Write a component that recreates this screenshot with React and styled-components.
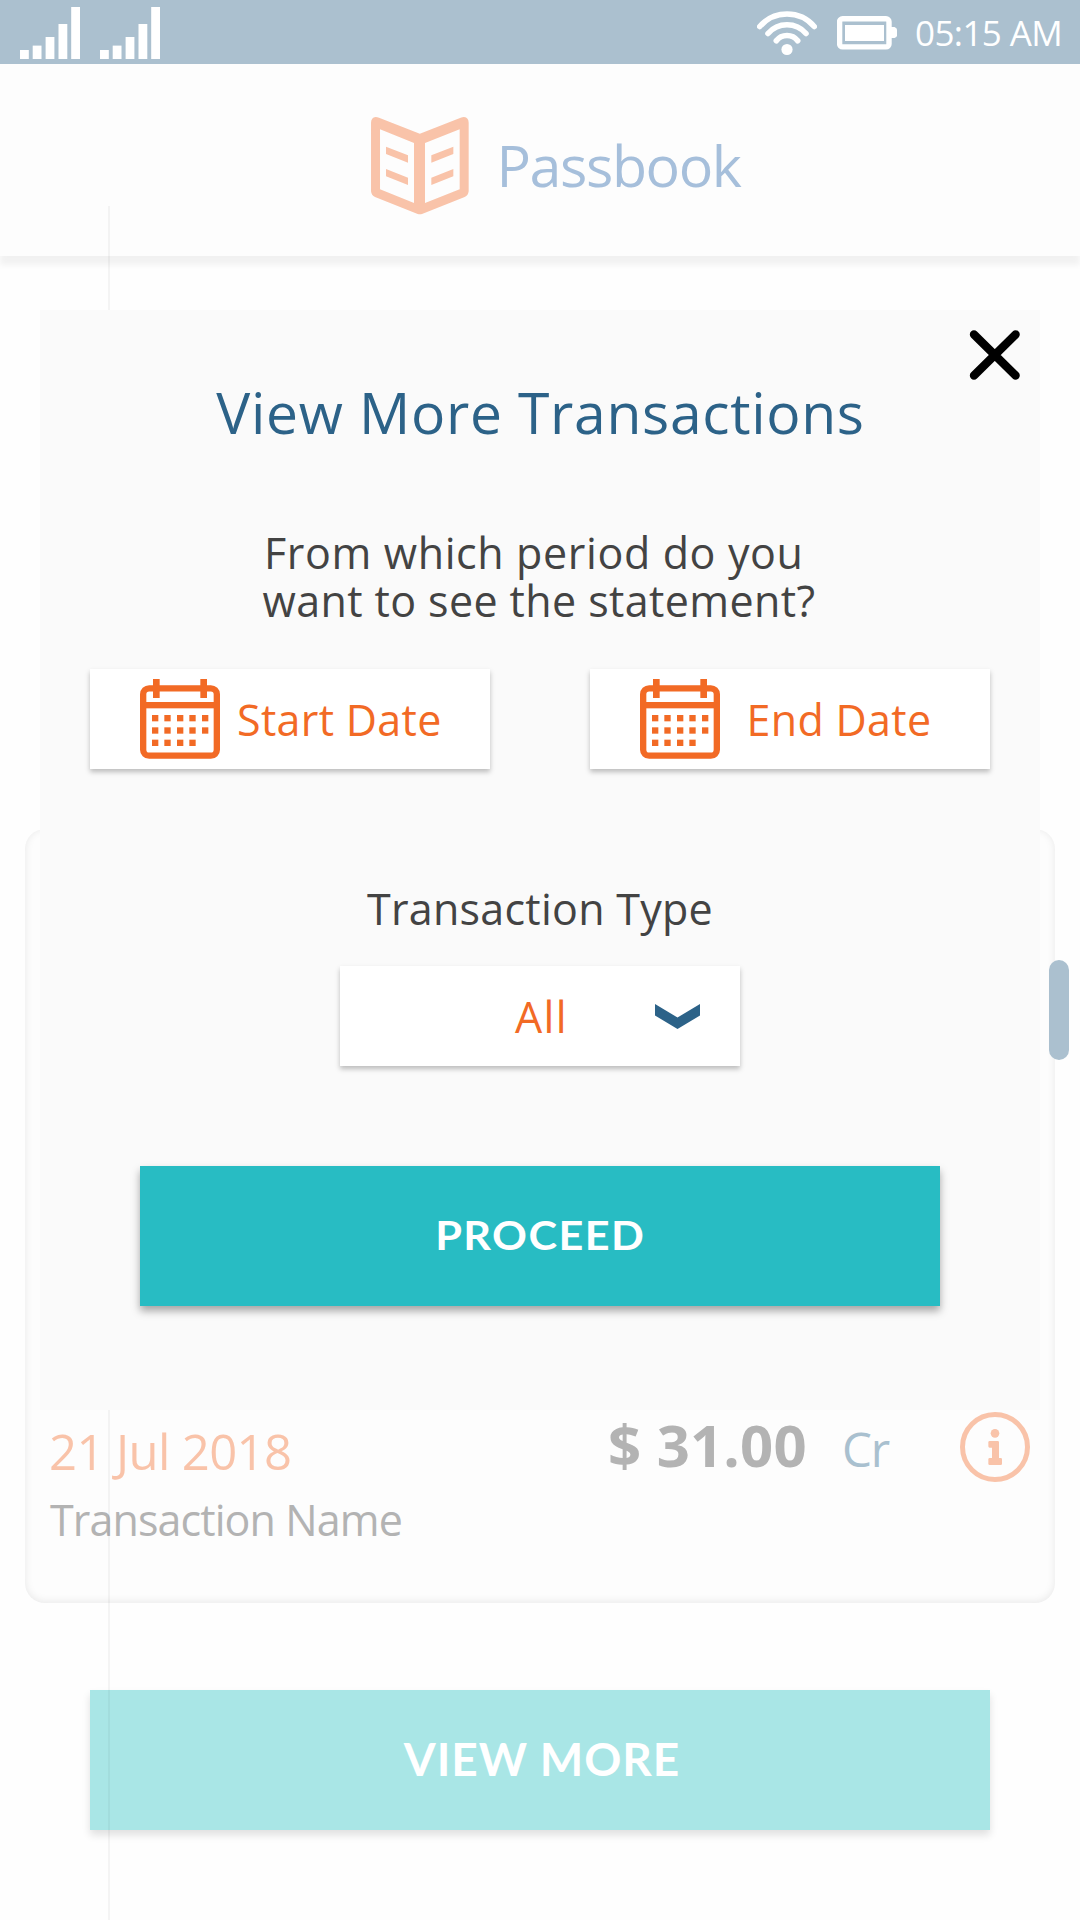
import React from 'react';
import styled, { createGlobalStyle } from 'styled-components';

const sans = '"Open Sans", "Noto Sans", sans-serif';
const display = 'Lato, "Open Sans", sans-serif';

const GlobalStyle = createGlobalStyle`
  *, *::before, *::after { box-sizing: border-box; }
  body { margin: 0; background: #fff; font-family: ${sans}; font-weight: 370; }
  button { font-family: inherit; font-weight: inherit; border: 0; margin: 0; padding: 0; cursor: pointer; }
  svg { display: block; flex: none; }
`;

const Screen = styled.div`
  position: relative;
  width: 1080px;
  height: 1920px;
  overflow: hidden;
  display: flex;
  flex-direction: column;
  background: #fefefe;
`;

const StatusBar = styled.div`
  height: 64px;
  flex: none;
  display: flex;
  align-items: center;
  justify-content: space-between;
  padding: 0 18px 0 20px;
  background: #abc0cf;
  color: #fff;
`;

const Signals = styled.div`
  display: flex;
  gap: 20px;
  padding-top: 2px;
`;

const StatusRight = styled.div`
  display: flex;
  align-items: center;
  gap: 20px;
`;

const Clock = styled.span`
  margin-left: -2px;
  padding-top: 2px;
  width: 147px;
  font-size: 35px;
  line-height: 48px;
  letter-spacing: -0.6px;
  white-space: nowrap;
`;

const Header = styled.header`
  height: 192px;
  flex: none;
  display: flex;
  align-items: center;
  gap: 27.5px;
  padding: 12px 0 0 371.3px;
  background: #fdfdfd;
  box-shadow: 0 9px 6px rgba(0, 0, 0, 0.05);
`;

const PageName = styled.h1`
  margin: 0;
  padding-bottom: 3px;
  font-size: 57.4px;
  font-weight: 370;
  line-height: 78px;
  letter-spacing: -1.42px;
  color: #a6bfdb;
`;

const Main = styled.main`
  flex: 1;
  display: flex;
  flex-direction: column;
  padding: 573px 25px 0 25px;
`;

const TransactionCard = styled.section`
  height: 774px;
  display: flex;
  justify-content: space-between;
  align-items: flex-end;
  padding: 0 25px 55px 24px;
  border-radius: 20px;
  background: #fdfdfd;
  box-shadow: inset 0 -1px 9px rgba(0, 0, 0, 0.085);
`;

const Details = styled.div`
  display: flex;
  flex-direction: column;
  margin-bottom: -2px;
`;

const DateText = styled.div`
  font-size: 49px;
  line-height: 68px;
  letter-spacing: -0.61px;
  color: #f9c3a9;
`;

const NameText = styled.div`
  font-size: 43px;
  line-height: 60px;
  padding: 5px 0 0 1px;
  letter-spacing: -0.9px;
  color: #b3b3b3;
`;

const Figures = styled.div`
  height: 136px;
  display: grid;
  grid-template-columns: 235px 118px 70px;
  align-items: start;
`;

const Amount = styled.div`
  padding-left: 1px;
  font-size: 58px;
  font-weight: 700;
  line-height: 66px;
  letter-spacing: 0.2px;
  color: #b3b3b3;
`;

const Kind = styled.div`
  font-size: 47.5px;
  line-height: 73px;
  letter-spacing: -1.2px;
  color: #a9c0cf;
`;

const InfoButton = styled.button`
  background: none;
`;

const SolidButton = styled.button`
  flex: none;
  height: 140px;
  display: flex;
  align-items: center;
  justify-content: center;
  padding: 0 0 3px ${(p) => p.$inset}px;
  margin: ${(p) => p.$margin};
  font-family: ${display};
  font-weight: 700;
  font-size: ${(p) => p.$size}px;
  letter-spacing: ${(p) => p.$tracking}px;
  color: #fff;
  background: ${(p) => (p.$muted ? '#a9e6e6' : '#28bcc3')};
  box-shadow: 0 5px 8px rgba(0, 0, 0, ${(p) => (p.$muted ? 0.12 : 0.34)});
`;

const WideLabel = styled.span`
  transform: scaleX(1.08);
`;

const Rail = styled.div`
  position: absolute;
  left: 108px;
  top: 206px;
  bottom: 0;
  width: 2px;
  background: rgba(0, 0, 0, 0.04);
`;

const ScrollThumb = styled.div`
  position: absolute;
  left: 1049px;
  top: 960px;
  width: 20px;
  height: 100px;
  border-radius: 10px;
  background: #abc0cf;
`;

const Dialog = styled.section`
  position: absolute;
  left: 40px;
  top: 310px;
  width: 1000px;
  height: 1100px;
  display: flex;
  flex-direction: column;
  padding-top: 72px;
  background: #fafafa;
`;

const CloseButton = styled.button`
  position: absolute;
  top: 20px;
  right: 20px;
  background: none;
`;

const DialogTitle = styled.h2`
  margin: 0;
  padding-left: 1px;
  text-align: center;
  font-size: 57px;
  font-weight: 370;
  line-height: 60px;
  letter-spacing: 0.67px;
  color: #2c6288;
`;

const Question = styled.p`
  margin: 87px 0 44px 224px;
  font-size: 43px;
  line-height: 48px;
  color: #434343;
`;

const QuestionLine = styled.span`
  display: block;
  margin-left: ${(p) => p.$shift || 0}px;
  letter-spacing: ${(p) => p.$tracking}px;
`;

const DateRow = styled.div`
  display: flex;
  gap: 100px;
  padding: 0 50px;
`;

const field = `
  height: 100px;
  width: 400px;
  display: flex;
  align-items: center;
  font-size: 43px;
  color: #f26a25;
  background: #fff;
  box-shadow: 0 3px 5px rgba(0, 0, 0, 0.25);
`;

const DateField = styled.button`
  ${field}
  padding: 0 0 0 50px;
  gap: ${(p) => p.$gap}px;
  letter-spacing: 0.32px;
`;

const FieldLabel = styled.div`
  margin: 116px 0 33px;
  text-align: center;
  font-size: 43px;
  line-height: 48px;
  letter-spacing: 0.27px;
  color: #434343;
`;

const Select = styled.button`
  ${field}
  align-self: center;
  justify-content: space-between;
  padding: 0 40px 0 175px;
  letter-spacing: 1.3px;
`;

const SignalIcon = () => (
  <svg width="60" height="52" viewBox="0 0 60 52" fill="#fff">
    <rect x="0" y="43" width="8.8" height="9" />
    <rect x="12.7" y="38.6" width="8.8" height="13.4" />
    <rect x="25.6" y="30" width="8.8" height="22" />
    <rect x="38.5" y="17" width="8.8" height="35" />
    <rect x="51.2" y="0" width="8.8" height="52" />
  </svg>
);

const WifiIcon = () => (
  <svg width="60" height="64" viewBox="0 0 60 64" fill="none" stroke="#fff" strokeWidth="5.6" strokeLinecap="round">
    <path d="M2.8 26.5A35.9 35.9 0 0 1 57.2 26.5" />
    <path d="M11 33.5A25.1 25.1 0 0 1 49 33.5" />
    <path d="M19.3 40.8A13.4 13.4 0 0 1 40.7 40.8" />
    <circle cx="30" cy="49.5" r="5.6" fill="#fff" stroke="none" />
  </svg>
);

const BatteryIcon = () => (
  <svg width="60" height="64" viewBox="0 0 60 64">
    <rect x="2.6" y="18.7" width="49.4" height="28.2" rx="3" fill="none" stroke="#fff" strokeWidth="5.4" />
    <rect x="8" y="25" width="39" height="16" fill="#fff" />
    <path d="M54 27h3.500q2.500 1 2.500 2.500v6q0 1.500-2.500 2.500H54z" fill="#fff" />
  </svg>
);

const BookIcon = () => (
  <svg width="97.7" height="97.3" viewBox="94 82 293 292" fill="#f9c3a9">
    <path
      fillRule="evenodd"
      d="M94 99Q94 84 108 82Q113 82 118 84L240.500 132L363 84Q368 82 373 82Q387 84 387 99V305Q386 317 375 322L247 373Q240.500 375 234 373L106 322Q95 317 94 305ZM121 119V299L223 340V160ZM360 119L256 160V340L360 299Z"
    />
    <path d="M139 171L205 197V219L139 193ZM139 238L205 264V286L139 260ZM341 171L275 197V219L341 193ZM341 238L275 264V286L341 260Z" />
  </svg>
);

const CalendarIcon = () => {
  const columns = [36, 73, 111, 148, 186];
  const rows = [108, 145, 182];
  return (
    <svg width="80" height="80" viewBox="0 0 240 240" fill="#f26a25">
      <rect x="9.5" y="28" width="221" height="202" rx="18" fill="none" stroke="#f26a25" strokeWidth="19" />
      <rect x="10" y="69" width="220" height="19" />
      <rect x="39" y="0" width="20" height="57" />
      <rect x="181" y="0" width="20" height="57" />
      {rows.map((y, r) =>
        columns.map((x, c) => (r === 2 && c === 4 ? null : <rect key={`${x}-${y}`} x={x} y={y} width="19" height="19" />))
      )}
    </svg>
  );
};

const CloseIcon = () => (
  <svg width="51" height="50" viewBox="0 0 51 50" stroke="#000" strokeWidth="8.4" strokeLinecap="round">
    <path d="M5 4.400L46.600 45.600M46.600 4.400L5 45.600" />
  </svg>
);

const ChevronIcon = () => (
  <svg width="45" height="25" viewBox="0 0 45 25" fill="#2c6288">
    <path d="M0 0L22.500 13.500L45 0V11.500L22.500 25L0 11.500Z" />
  </svg>
);

const InfoIcon = () => (
  <svg width="70" height="70" viewBox="0 0 210 210" fill="#f9c3a9">
    <circle cx="105" cy="105" r="97.5" fill="none" stroke="#f9c3a9" strokeWidth="15" />
    <circle cx="105" cy="64" r="13" />
    <path d="M89 87H113Q117 87 117 91V138H122Q126 138 126 142V155Q126 159 122 159H89Q85 159 85 155V142Q85 138 89 138H96V107H89Q85 107 85 103V91Q85 87 89 87Z" />
  </svg>
);

export default function App() {
  return (
    <Screen>
      <GlobalStyle />
      <StatusBar>
        <Signals>
          <SignalIcon />
          <SignalIcon />
        </Signals>
        <StatusRight>
          <WifiIcon />
          <BatteryIcon />
          <Clock>05:15 AM</Clock>
        </StatusRight>
      </StatusBar>
      <Header>
        <BookIcon />
        <PageName>Passbook</PageName>
      </Header>
      <Main>
        <TransactionCard>
          <Details>
            <DateText>21 Jul 2018</DateText>
            <NameText>Transaction Name</NameText>
          </Details>
          <Figures>
            <Amount>$ 31.00</Amount>
            <Kind>Cr</Kind>
            <InfoButton aria-label="Transaction details">
              <InfoIcon />
            </InfoButton>
          </Figures>
        </TransactionCard>
        <SolidButton $muted $size={46} $tracking={0.95} $inset={4} $margin="87px 65px 0">
          VIEW MORE
        </SolidButton>
      </Main>
      <Rail />
      <ScrollThumb />
      <Dialog role="dialog">
        <CloseButton aria-label="Close">
          <CloseIcon />
        </CloseButton>
        <DialogTitle>View More Transactions</DialogTitle>
        <Question>
          <QuestionLine $tracking={0.62}>From which period do you</QuestionLine>
          <QuestionLine $tracking={0.39} $shift={-1.5}>want to see the statement?</QuestionLine>
        </Question>
        <DateRow>
          <DateField $gap={17}>
            <CalendarIcon />
            Start Date
          </DateField>
          <DateField $gap={26.5}>
            <CalendarIcon />
            End Date
          </DateField>
        </DateRow>
        <FieldLabel>Transaction Type</FieldLabel>
        <Select>
          All
          <ChevronIcon />
        </Select>
        <SolidButton $size={40} $tracking={1.3} $inset={1} $margin="100px 100px 0">
          <WideLabel>PROCEED</WideLabel>
        </SolidButton>
      </Dialog>
    </Screen>
  );
}
